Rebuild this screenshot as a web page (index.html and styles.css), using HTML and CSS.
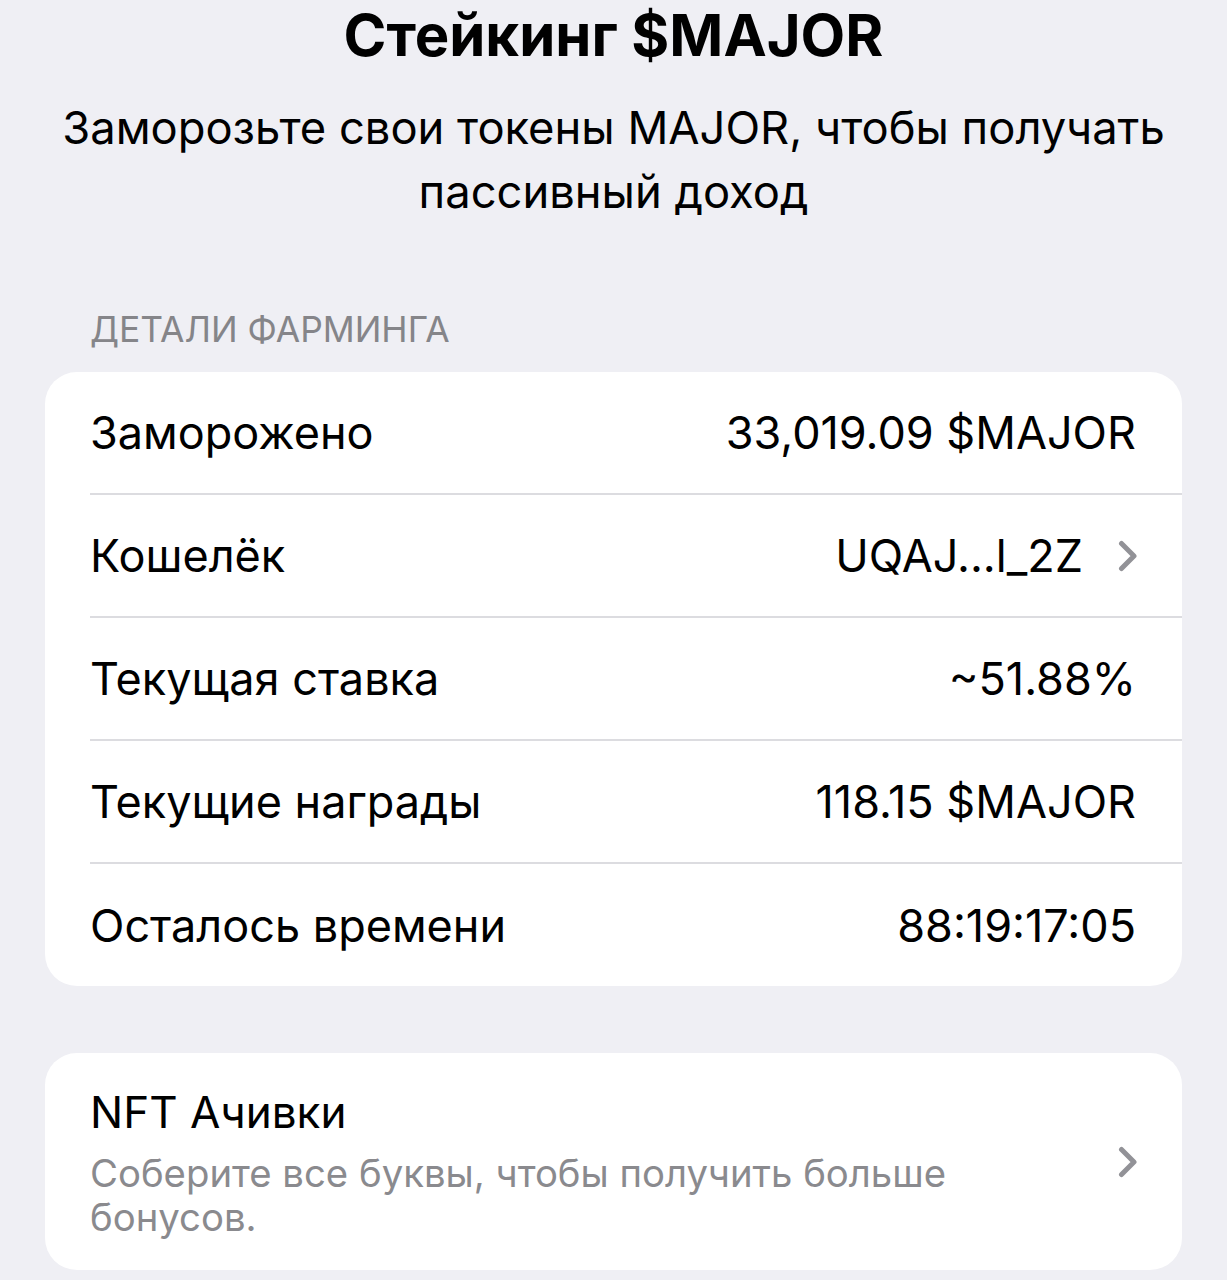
FILE: index.html
```html
<!DOCTYPE html>
<html>
<head>
	<meta charset="UTF-8">
	<title>Стейкинг $MAJOR</title>
	<link rel="stylesheet" href="styles.css">
</head>
<body>
	<div class="intro">
		<h1 class="title">Стейкинг $MAJOR</h1>
		<p class="lead">Заморозьте свои токены MAJOR, чтобы получать пассивный доход</p>
	</div>

	<div class="section-head">Детали фарминга</div>
	<div class="card">
		<div class="row">
			<div class="row-inner">
				<span class="label">Заморожено</span>
				<span class="value">33,019.09 $MAJOR</span>
			</div>
		</div>
		<div class="row">
			<div class="row-inner">
				<span class="label">Кошелёк</span>
				<span class="value link">UQAJ...l_2Z
					<svg class="chev" width="20" height="32" viewBox="0 0 20 32"><path d="M3.5 3.5 L16 16 L3.5 28.5" fill="none" stroke="#929297" stroke-width="5" stroke-linecap="round" stroke-linejoin="round"/></svg>
				</span>
			</div>
		</div>
		<div class="row">
			<div class="row-inner">
				<span class="label">Текущая ставка</span>
				<span class="value">~51.88%</span>
			</div>
		</div>
		<div class="row">
			<div class="row-inner">
				<span class="label">Текущие награды</span>
				<span class="value">118.15 $MAJOR</span>
			</div>
		</div>
		<div class="row">
			<div class="row-inner">
				<span class="label">Осталось времени</span>
				<span class="value">88:19:17:05</span>
			</div>
		</div>
	</div>

	<div class="card card-nft">
		<div class="nft">
			<div class="nft-text">
				<div class="label">NFT Ачивки</div>
				<div class="hint">Соберите все буквы, чтобы получить больше бонусов.</div>
			</div>
			<svg class="chev" width="20" height="32" viewBox="0 0 20 32"><path d="M3.5 3.5 L16 16 L3.5 28.5" fill="none" stroke="#929297" stroke-width="5" stroke-linecap="round" stroke-linejoin="round"/></svg>
		</div>
	</div>
</body>
</html>
```

FILE: styles.css
```css
body
{
	margin: 0;
	background-color: #efeff4;
	font-family: Inter, "Liberation Sans", sans-serif;
	color: #000;
}

.intro
{
	text-align: center;
	padding: 0 50px;
}

.title
{
	font-size: 58px;
	font-weight: 700;
	line-height: 70px;
	margin: 0 0 26px 0;
}

.lead
{
	font-size: 45.3px;
	line-height: 64px;
	margin: 0;
}

.section-head
{
	text-transform: uppercase;
	color: #858589;
	font-size: 35.4px;
	padding: 84px 0 0 90px;
	height: 64px;
}

.card
{
	background: #fff;
	margin: 0 45px;
	border-radius: 32px;
	overflow: hidden;
}

.row
{
	padding-left: 45px;
}

.row-inner
{
	display: flex;
	justify-content: space-between;
	align-items: center;
	height: 121px;
	padding-right: 46px;
	border-bottom: 2px solid #dcdce0;
}

.row:last-child .row-inner
{
	border-bottom: none;
	height: 122px;
}

.label
{
	font-size: 45px;
}

.value
{
	font-size: 45px;
	display: flex;
	align-items: center;
}

.link .chev
{
	margin-left: 35px;
	margin-right: -2px;
}

.card-nft
{
	margin-top: 67px;
}

.nft
{
	display: flex;
	align-items: center;
	justify-content: space-between;
	height: 217px;
	padding: 0 44px 0 45px;
}

.nft .label
{
	font-size: 44px;
	line-height: 56px;
	margin-bottom: 11px;
}

.hint
{
	color: #8a8a8e;
	font-size: 38.3px;
	line-height: 44px;
	width: 900px;
}
```
